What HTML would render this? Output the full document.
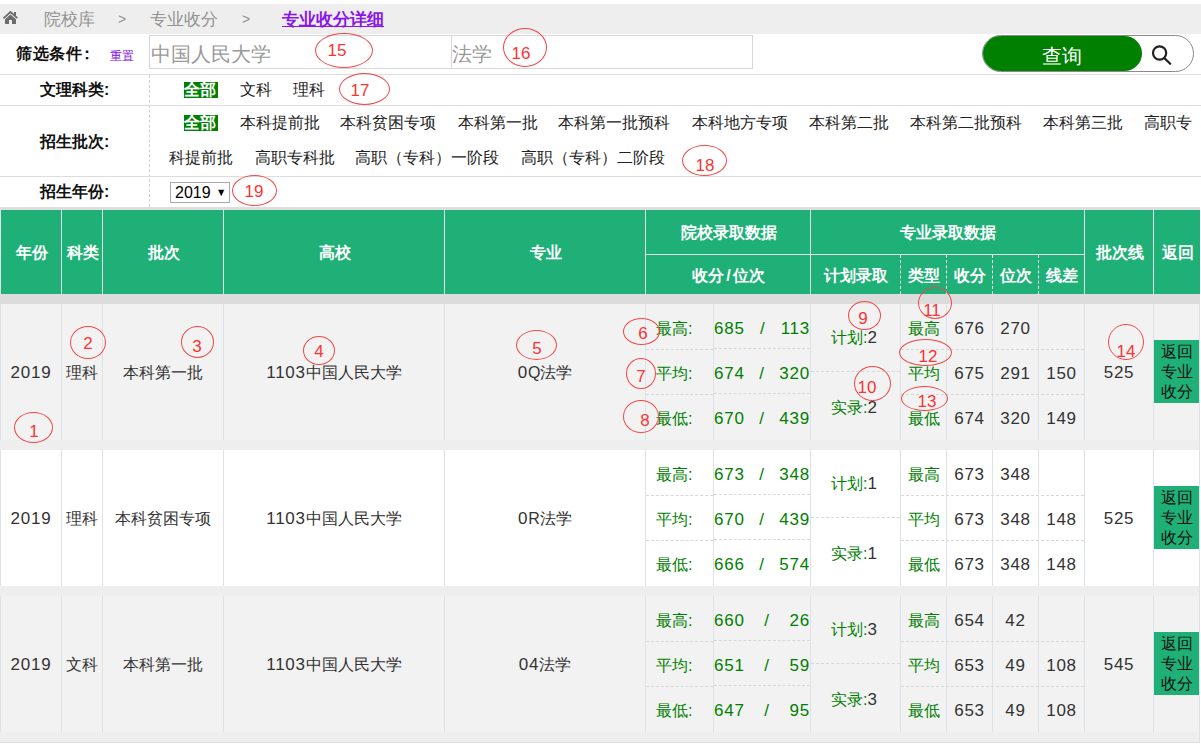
<!DOCTYPE html>
<html><head><meta charset="utf-8"><style>
html,body{margin:0;padding:0;}
body{width:1201px;height:744px;overflow:hidden;position:relative;background:#fff;font-family:"Liberation Sans", sans-serif;}
.t{position:absolute;white-space:nowrap;}
.r{position:absolute;}
.d{font-size:17px;letter-spacing:0.75px;}
</style></head><body>
<div class="r" style="left:0px;top:4px;width:1201px;height:30px;background:#eeeeee"></div>
<svg class="r" style="left:0;top:0" width="30" height="30" viewBox="0 0 30 30"><path d="M3.4 18.3 L10.5 12 L17.4 18.1" fill="none" stroke="#6b6b6b" stroke-width="1.7"/><rect x="14" y="12" width="2" height="4" fill="#6b6b6b"/><path d="M5 19.2 L10.5 14.4 L16 19.2 V23.9 H12 V20 H9 V23.9 H5 Z" fill="#6b6b6b"/></svg>
<div class="t" style="left:44px;top:11px;font-size:17px;line-height:17px;color:#929292;font-weight:normal;">院校库</div>
<div class="t" style="left:118px;top:12px;font-size:14px;line-height:14px;color:#929292;font-weight:normal;">&gt;</div>
<div class="t" style="left:150px;top:11px;font-size:17px;line-height:17px;color:#929292;font-weight:normal;">专业收分</div>
<div class="t" style="left:242px;top:12px;font-size:14px;line-height:14px;color:#929292;font-weight:normal;">&gt;</div>
<div class="t" style="left:282px;top:11px;font-size:17px;line-height:17px;color:#8a17e6;font-weight:bold;text-decoration:underline">专业收分详细</div>
<div class="t" style="left:16px;top:46px;font-size:16px;line-height:16px;color:#111;font-weight:bold;letter-spacing:0.7px">筛选条件<span style="margin-left:-4px">：</span></div>
<div class="t" style="left:110px;top:50px;font-size:12px;line-height:12px;color:#7c0ce0;font-weight:normal;letter-spacing:-0.3px">重置</div>
<div class="r" style="left:149px;top:35px;width:303px;height:34px;border:1px solid #d6d6d6;box-sizing:border-box"></div>
<div class="r" style="left:451px;top:35px;width:302px;height:34px;border:1px solid #d6d6d6;box-sizing:border-box"></div>
<div class="t" style="left:151px;top:43.5px;font-size:20px;line-height:20px;color:#999;font-weight:normal;">中国人民大学</div>
<div class="t" style="left:452px;top:43.5px;font-size:20px;line-height:20px;color:#999;font-weight:normal;">法学</div>
<div class="r" style="left:982px;top:35px;width:212px;height:37px;border:1px solid #8a8a8a;border-radius:19px;box-sizing:border-box;background:#fff"></div>
<div class="r" style="left:983px;top:36px;width:159px;height:35px;background:#008000;border-radius:18px"></div>
<div class="t" style="left:1042px;top:45.5px;font-size:20px;line-height:20px;color:#fff;font-weight:normal;">查询</div>
<svg class="r" style="left:1150px;top:43px" width="24" height="24" viewBox="0 0 24 24"><circle cx="9.6" cy="10" r="6.6" fill="none" stroke="#222" stroke-width="2.2"/><path d="M14.3 15 L20.2 20.8" stroke="#222" stroke-width="2.3" stroke-linecap="round"/></svg>
<div class="r" style="left:0px;top:74px;width:1201px;height:1px;background:#dddddd"></div>
<div class="t" style="left:40px;top:82px;font-size:16px;line-height:16px;color:#111;font-weight:bold;">文理科类:</div>
<div class="r" style="left:149px;top:75px;width:1px;height:132px;border-left:1px dashed #cfcfcf"></div>
<div class="r" style="left:184px;top:82px;width:34px;height:16px;background:#008000"></div>
<div class="t" style="left:184px;top:82px;font-size:16px;line-height:16px;color:#fff;font-weight:bold;">全部</div>
<div class="t" style="left:240px;top:82px;font-size:16px;line-height:16px;color:#222;font-weight:normal;">文科</div>
<div class="t" style="left:293px;top:82px;font-size:16px;line-height:16px;color:#222;font-weight:normal;">理科</div>
<div class="r" style="left:0px;top:105px;width:1201px;height:1px;background:#dddddd"></div>
<div class="t" style="left:40px;top:134px;font-size:16px;line-height:16px;color:#111;font-weight:bold;">招生批次:</div>
<div class="r" style="left:184px;top:115px;width:34px;height:16px;background:#008000"></div>
<div class="t" style="left:184px;top:115px;font-size:16px;line-height:16px;color:#fff;font-weight:bold;">全部</div>
<div class="t" style="left:240px;top:115px;font-size:16px;line-height:16px;color:#222;font-weight:normal;">本科提前批</div>
<div class="t" style="left:340px;top:115px;font-size:16px;line-height:16px;color:#222;font-weight:normal;">本科贫困专项</div>
<div class="t" style="left:458px;top:115px;font-size:16px;line-height:16px;color:#222;font-weight:normal;">本科第一批</div>
<div class="t" style="left:558px;top:115px;font-size:16px;line-height:16px;color:#222;font-weight:normal;">本科第一批预科</div>
<div class="t" style="left:692px;top:115px;font-size:16px;line-height:16px;color:#222;font-weight:normal;">本科地方专项</div>
<div class="t" style="left:809px;top:115px;font-size:16px;line-height:16px;color:#222;font-weight:normal;">本科第二批</div>
<div class="t" style="left:910px;top:115px;font-size:16px;line-height:16px;color:#222;font-weight:normal;">本科第二批预科</div>
<div class="t" style="left:1043px;top:115px;font-size:16px;line-height:16px;color:#222;font-weight:normal;">本科第三批</div>
<div class="t" style="left:1144px;top:115px;font-size:16px;line-height:16px;color:#222;font-weight:normal;">高职专</div>
<div class="t" style="left:169px;top:150px;font-size:16px;line-height:16px;color:#222;font-weight:normal;">科提前批</div>
<div class="t" style="left:255px;top:150px;font-size:16px;line-height:16px;color:#222;font-weight:normal;">高职专科批</div>
<div class="t" style="left:355px;top:150px;font-size:16px;line-height:16px;color:#222;font-weight:normal;">高职（专科）一阶段</div>
<div class="t" style="left:521px;top:150px;font-size:16px;line-height:16px;color:#222;font-weight:normal;">高职（专科）二阶段</div>
<div class="r" style="left:0px;top:176px;width:1201px;height:1px;background:#dddddd"></div>
<div class="t" style="left:40px;top:184px;font-size:16px;line-height:16px;color:#111;font-weight:bold;">招生年份:</div>
<div class="r" style="left:170px;top:182px;width:60px;height:21px;border:1px solid #a9a9a9;box-sizing:border-box;background:#fff"></div>
<div class="t" style="left:175px;top:185px;font-size:16px;line-height:16px;color:#000;font-weight:normal;">2019</div>
<div class="t" style="left:216px;top:186.5px;font-size:11px;line-height:11px;color:#000;font-weight:normal;transform:scaleX(0.95);transform-origin:left">&#9660;</div>
<div class="r" style="left:0px;top:207px;width:1200px;height:3px;background:#dedede"></div>
<div class="r" style="left:0px;top:210px;width:1200px;height:84px;background:#1fb077"></div>
<div class="r" style="left:61px;top:210px;width:1px;height:84px;background:#e2e6e8"></div>
<div class="r" style="left:102px;top:210px;width:1px;height:84px;background:#e2e6e8"></div>
<div class="r" style="left:223px;top:210px;width:1px;height:84px;background:#e2e6e8"></div>
<div class="r" style="left:444px;top:210px;width:1px;height:84px;background:#e2e6e8"></div>
<div class="r" style="left:645px;top:210px;width:1px;height:84px;background:#e2e6e8"></div>
<div class="r" style="left:810px;top:210px;width:1px;height:84px;background:#e2e6e8"></div>
<div class="r" style="left:1084px;top:210px;width:1px;height:84px;background:#e2e6e8"></div>
<div class="r" style="left:1153px;top:210px;width:1px;height:84px;background:#e2e6e8"></div>
<div class="r" style="left:0px;top:210px;width:1px;height:84px;background:#e2e6e8"></div>
<div class="r" style="left:645px;top:254px;width:439px;height:1px;background:#e2e6e8"></div>
<div class="r" style="left:900px;top:255px;width:1px;height:39px;border-left:1px dashed #f0f0f0"></div>
<div class="r" style="left:946px;top:255px;width:1px;height:39px;border-left:1px dashed #f0f0f0"></div>
<div class="r" style="left:992px;top:255px;width:1px;height:39px;border-left:1px dashed #f0f0f0"></div>
<div class="r" style="left:1038px;top:255px;width:1px;height:39px;border-left:1px dashed #f0f0f0"></div>
<div class="t" style="left:1.5px;top:245.0px;width:60px;text-align:center;font-size:16px;line-height:16px;color:#fff;font-weight:bold;">年份</div>
<div class="t" style="left:62.5px;top:245.0px;width:40px;text-align:center;font-size:16px;line-height:16px;color:#fff;font-weight:bold;">科类</div>
<div class="t" style="left:103.5px;top:245.0px;width:120px;text-align:center;font-size:16px;line-height:16px;color:#fff;font-weight:bold;">批次</div>
<div class="t" style="left:224.5px;top:245.0px;width:220px;text-align:center;font-size:16px;line-height:16px;color:#fff;font-weight:bold;">高校</div>
<div class="t" style="left:445.5px;top:245.0px;width:200px;text-align:center;font-size:16px;line-height:16px;color:#fff;font-weight:bold;">专业</div>
<div class="t" style="left:646.5px;top:225.0px;width:164px;text-align:center;font-size:16px;line-height:16px;color:#fff;font-weight:bold;">院校录取数据</div>
<div class="t" style="left:646.5px;top:267.5px;width:164px;text-align:center;font-size:16px;line-height:16px;color:#fff;font-weight:bold;">收分<span style="margin:0 2px">/</span>位次</div>
<div class="t" style="left:811.5px;top:225.0px;width:273px;text-align:center;font-size:16px;line-height:16px;color:#fff;font-weight:bold;">专业录取数据</div>
<div class="t" style="left:811.5px;top:267.5px;width:89px;text-align:center;font-size:16px;line-height:16px;color:#fff;font-weight:bold;">计划录取</div>
<div class="t" style="left:901.5px;top:267.5px;width:45px;text-align:center;font-size:16px;line-height:16px;color:#fff;font-weight:bold;">类型</div>
<div class="t" style="left:947.5px;top:267.5px;width:45px;text-align:center;font-size:16px;line-height:16px;color:#fff;font-weight:bold;">收分</div>
<div class="t" style="left:993.5px;top:267.5px;width:45px;text-align:center;font-size:16px;line-height:16px;color:#fff;font-weight:bold;">位次</div>
<div class="t" style="left:1039.5px;top:267.5px;width:45px;text-align:center;font-size:16px;line-height:16px;color:#fff;font-weight:bold;">线差</div>
<div class="t" style="left:1085.5px;top:245.0px;width:68px;text-align:center;font-size:16px;line-height:16px;color:#fff;font-weight:bold;">批次线</div>
<div class="t" style="left:1154.5px;top:245.0px;width:46px;text-align:center;font-size:16px;line-height:16px;color:#fff;font-weight:bold;">返回</div>
<div class="r" style="left:0px;top:294px;width:1200px;height:10px;background:#dcdcdc"></div>
<div class="r" style="left:0px;top:304px;width:1199px;height:136px;background:#f2f2f2"></div>
<div class="r" style="left:0px;top:304px;width:1px;height:136px;background:#dde1e8"></div>
<div class="r" style="left:61px;top:304px;width:1px;height:136px;background:#dde1e8"></div>
<div class="r" style="left:102px;top:304px;width:1px;height:136px;background:#dde1e8"></div>
<div class="r" style="left:223px;top:304px;width:1px;height:136px;background:#dde1e8"></div>
<div class="r" style="left:444px;top:304px;width:1px;height:136px;background:#dde1e8"></div>
<div class="r" style="left:645px;top:304px;width:1px;height:136px;background:#dde1e8"></div>
<div class="r" style="left:713px;top:304px;width:1px;height:136px;background:#dde1e8"></div>
<div class="r" style="left:810px;top:304px;width:1px;height:136px;background:#dde1e8"></div>
<div class="r" style="left:900px;top:304px;width:1px;height:136px;background:#dde1e8"></div>
<div class="r" style="left:946px;top:304px;width:1px;height:136px;background:#dde1e8"></div>
<div class="r" style="left:992px;top:304px;width:1px;height:136px;background:#dde1e8"></div>
<div class="r" style="left:1038px;top:304px;width:1px;height:136px;background:#dde1e8"></div>
<div class="r" style="left:1084px;top:304px;width:1px;height:136px;background:#dde1e8"></div>
<div class="r" style="left:1153px;top:304px;width:1px;height:136px;background:#dde1e8"></div>
<div class="r" style="left:1199px;top:304px;width:1px;height:136px;background:#dde1e8"></div>
<div class="r" style="left:646px;top:349px;width:67px;height:1px;border-top:1px dashed #d8d8d8"></div>
<div class="r" style="left:714px;top:348px;width:96px;height:1px;border-top:1px dashed #d8d8d8"></div>
<div class="r" style="left:901px;top:349px;width:183px;height:1px;border-top:1px dashed #d8d8d8"></div>
<div class="r" style="left:646px;top:394px;width:67px;height:1px;border-top:1px dashed #d8d8d8"></div>
<div class="r" style="left:714px;top:393px;width:96px;height:1px;border-top:1px dashed #d8d8d8"></div>
<div class="r" style="left:901px;top:394px;width:183px;height:1px;border-top:1px dashed #d8d8d8"></div>
<div class="r" style="left:811px;top:371px;width:89px;height:1px;border-top:1px dashed #d8d8d8"></div>
<div class="t" style="left:-19.0px;top:365px;width:100px;text-align:center;font-size:16px;line-height:16px;color:#333;font-weight:normal;"><span class="d">2019</span></div>
<div class="t" style="left:42.0px;top:365px;width:80px;text-align:center;font-size:16px;line-height:16px;color:#333;font-weight:normal;">理科</div>
<div class="t" style="left:83.0px;top:365px;width:160px;text-align:center;font-size:16px;line-height:16px;color:#333;font-weight:normal;">本科第一批</div>
<div class="t" style="left:204.0px;top:365px;width:260px;text-align:center;font-size:16px;line-height:16px;color:#333;font-weight:normal;"><span class="d">1103</span>中国人民大学</div>
<div class="t" style="left:425.0px;top:365px;width:240px;text-align:center;font-size:16px;line-height:16px;color:#333;font-weight:normal;"><span class="d">0</span>Q法学</div>
<div class="t" style="left:1065.0px;top:365px;width:108px;text-align:center;font-size:16px;line-height:16px;color:#333;font-weight:normal;"><span class="d">525</span></div>
<div class="t" style="left:656px;top:321px;font-size:16px;line-height:16px;color:#008000;font-weight:normal;">最高:</div>
<div class="t" style="left:714px;top:320.5px;width:96px;display:flex;justify-content:space-between;font-size:16px;line-height:16px;color:#008000"><span class="d">685</span><span class="d">/</span><span class="d">113</span></div>
<div class="t" style="left:656px;top:366px;font-size:16px;line-height:16px;color:#008000;font-weight:normal;">平均:</div>
<div class="t" style="left:714px;top:365.5px;width:96px;display:flex;justify-content:space-between;font-size:16px;line-height:16px;color:#008000"><span class="d">674</span><span class="d">/</span><span class="d">320</span></div>
<div class="t" style="left:656px;top:411px;font-size:16px;line-height:16px;color:#008000;font-weight:normal;">最低:</div>
<div class="t" style="left:714px;top:410.5px;width:96px;display:flex;justify-content:space-between;font-size:16px;line-height:16px;color:#008000"><span class="d">670</span><span class="d">/</span><span class="d">439</span></div>
<div class="t" style="left:901.0px;top:321px;width:45px;text-align:center;font-size:16px;line-height:16px;color:#008000;font-weight:normal;">最高</div>
<div class="t" style="left:946.5px;top:320.5px;width:46px;text-align:center;font-size:16px;line-height:16px;color:#333;font-weight:normal;"><span class="d">676</span></div>
<div class="t" style="left:992.5px;top:320.5px;width:46px;text-align:center;font-size:16px;line-height:16px;color:#333;font-weight:normal;"><span class="d">270</span></div>
<div class="t" style="left:901.0px;top:366px;width:45px;text-align:center;font-size:16px;line-height:16px;color:#008000;font-weight:normal;">平均</div>
<div class="t" style="left:946.5px;top:365.5px;width:46px;text-align:center;font-size:16px;line-height:16px;color:#333;font-weight:normal;"><span class="d">675</span></div>
<div class="t" style="left:992.5px;top:365.5px;width:46px;text-align:center;font-size:16px;line-height:16px;color:#333;font-weight:normal;"><span class="d">291</span></div>
<div class="t" style="left:1038.5px;top:365.5px;width:46px;text-align:center;font-size:16px;line-height:16px;color:#333;font-weight:normal;"><span class="d">150</span></div>
<div class="t" style="left:901.0px;top:411px;width:45px;text-align:center;font-size:16px;line-height:16px;color:#008000;font-weight:normal;">最低</div>
<div class="t" style="left:946.5px;top:410.5px;width:46px;text-align:center;font-size:16px;line-height:16px;color:#333;font-weight:normal;"><span class="d">674</span></div>
<div class="t" style="left:992.5px;top:410.5px;width:46px;text-align:center;font-size:16px;line-height:16px;color:#333;font-weight:normal;"><span class="d">320</span></div>
<div class="t" style="left:1038.5px;top:410.5px;width:46px;text-align:center;font-size:16px;line-height:16px;color:#333;font-weight:normal;"><span class="d">149</span></div>
<div class="t" style="left:831px;top:330px;font-size:16px;line-height:16px;color:#008000;font-weight:normal;">计划:<span class="d" style="color:#333">2</span></div>
<div class="t" style="left:831px;top:400px;font-size:16px;line-height:16px;color:#008000;font-weight:normal;">实录:<span class="d" style="color:#333">2</span></div>
<div class="r" style="left:1154px;top:340px;width:45px;height:63px;background:#1fb077"></div>
<div class="t" style="left:1154.0px;top:342px;width:45px;text-align:center;font-size:16px;line-height:16px;color:#111;font-weight:normal;line-height:20px">返回<br>专业<br>收分</div>
<div class="r" style="left:0px;top:440px;width:1199px;height:10px;background:#eeeeee"></div>
<div class="r" style="left:1199px;top:440px;width:1px;height:10px;background:#dde1e8"></div>
<div class="r" style="left:0px;top:450px;width:1199px;height:136px;background:#ffffff"></div>
<div class="r" style="left:0px;top:450px;width:1px;height:136px;background:#dde1e8"></div>
<div class="r" style="left:61px;top:450px;width:1px;height:136px;background:#dde1e8"></div>
<div class="r" style="left:102px;top:450px;width:1px;height:136px;background:#dde1e8"></div>
<div class="r" style="left:223px;top:450px;width:1px;height:136px;background:#dde1e8"></div>
<div class="r" style="left:444px;top:450px;width:1px;height:136px;background:#dde1e8"></div>
<div class="r" style="left:645px;top:450px;width:1px;height:136px;background:#dde1e8"></div>
<div class="r" style="left:713px;top:450px;width:1px;height:136px;background:#dde1e8"></div>
<div class="r" style="left:810px;top:450px;width:1px;height:136px;background:#dde1e8"></div>
<div class="r" style="left:900px;top:450px;width:1px;height:136px;background:#dde1e8"></div>
<div class="r" style="left:946px;top:450px;width:1px;height:136px;background:#dde1e8"></div>
<div class="r" style="left:992px;top:450px;width:1px;height:136px;background:#dde1e8"></div>
<div class="r" style="left:1038px;top:450px;width:1px;height:136px;background:#dde1e8"></div>
<div class="r" style="left:1084px;top:450px;width:1px;height:136px;background:#dde1e8"></div>
<div class="r" style="left:1153px;top:450px;width:1px;height:136px;background:#dde1e8"></div>
<div class="r" style="left:1199px;top:450px;width:1px;height:136px;background:#dde1e8"></div>
<div class="r" style="left:646px;top:495px;width:67px;height:1px;border-top:1px dashed #d8d8d8"></div>
<div class="r" style="left:714px;top:494px;width:96px;height:1px;border-top:1px dashed #d8d8d8"></div>
<div class="r" style="left:901px;top:495px;width:183px;height:1px;border-top:1px dashed #d8d8d8"></div>
<div class="r" style="left:646px;top:540px;width:67px;height:1px;border-top:1px dashed #d8d8d8"></div>
<div class="r" style="left:714px;top:539px;width:96px;height:1px;border-top:1px dashed #d8d8d8"></div>
<div class="r" style="left:901px;top:540px;width:183px;height:1px;border-top:1px dashed #d8d8d8"></div>
<div class="r" style="left:811px;top:517px;width:89px;height:1px;border-top:1px dashed #d8d8d8"></div>
<div class="t" style="left:-19.0px;top:511px;width:100px;text-align:center;font-size:16px;line-height:16px;color:#333;font-weight:normal;"><span class="d">2019</span></div>
<div class="t" style="left:42.0px;top:511px;width:80px;text-align:center;font-size:16px;line-height:16px;color:#333;font-weight:normal;">理科</div>
<div class="t" style="left:83.0px;top:511px;width:160px;text-align:center;font-size:16px;line-height:16px;color:#333;font-weight:normal;">本科贫困专项</div>
<div class="t" style="left:204.0px;top:511px;width:260px;text-align:center;font-size:16px;line-height:16px;color:#333;font-weight:normal;"><span class="d">1103</span>中国人民大学</div>
<div class="t" style="left:425.0px;top:511px;width:240px;text-align:center;font-size:16px;line-height:16px;color:#333;font-weight:normal;"><span class="d">0</span>R法学</div>
<div class="t" style="left:1065.0px;top:511px;width:108px;text-align:center;font-size:16px;line-height:16px;color:#333;font-weight:normal;"><span class="d">525</span></div>
<div class="t" style="left:656px;top:467px;font-size:16px;line-height:16px;color:#008000;font-weight:normal;">最高:</div>
<div class="t" style="left:714px;top:466.5px;width:96px;display:flex;justify-content:space-between;font-size:16px;line-height:16px;color:#008000"><span class="d">673</span><span class="d">/</span><span class="d">348</span></div>
<div class="t" style="left:656px;top:512px;font-size:16px;line-height:16px;color:#008000;font-weight:normal;">平均:</div>
<div class="t" style="left:714px;top:511.5px;width:96px;display:flex;justify-content:space-between;font-size:16px;line-height:16px;color:#008000"><span class="d">670</span><span class="d">/</span><span class="d">439</span></div>
<div class="t" style="left:656px;top:557px;font-size:16px;line-height:16px;color:#008000;font-weight:normal;">最低:</div>
<div class="t" style="left:714px;top:556.5px;width:96px;display:flex;justify-content:space-between;font-size:16px;line-height:16px;color:#008000"><span class="d">666</span><span class="d">/</span><span class="d">574</span></div>
<div class="t" style="left:901.0px;top:467px;width:45px;text-align:center;font-size:16px;line-height:16px;color:#008000;font-weight:normal;">最高</div>
<div class="t" style="left:946.5px;top:466.5px;width:46px;text-align:center;font-size:16px;line-height:16px;color:#333;font-weight:normal;"><span class="d">673</span></div>
<div class="t" style="left:992.5px;top:466.5px;width:46px;text-align:center;font-size:16px;line-height:16px;color:#333;font-weight:normal;"><span class="d">348</span></div>
<div class="t" style="left:901.0px;top:512px;width:45px;text-align:center;font-size:16px;line-height:16px;color:#008000;font-weight:normal;">平均</div>
<div class="t" style="left:946.5px;top:511.5px;width:46px;text-align:center;font-size:16px;line-height:16px;color:#333;font-weight:normal;"><span class="d">673</span></div>
<div class="t" style="left:992.5px;top:511.5px;width:46px;text-align:center;font-size:16px;line-height:16px;color:#333;font-weight:normal;"><span class="d">348</span></div>
<div class="t" style="left:1038.5px;top:511.5px;width:46px;text-align:center;font-size:16px;line-height:16px;color:#333;font-weight:normal;"><span class="d">148</span></div>
<div class="t" style="left:901.0px;top:557px;width:45px;text-align:center;font-size:16px;line-height:16px;color:#008000;font-weight:normal;">最低</div>
<div class="t" style="left:946.5px;top:556.5px;width:46px;text-align:center;font-size:16px;line-height:16px;color:#333;font-weight:normal;"><span class="d">673</span></div>
<div class="t" style="left:992.5px;top:556.5px;width:46px;text-align:center;font-size:16px;line-height:16px;color:#333;font-weight:normal;"><span class="d">348</span></div>
<div class="t" style="left:1038.5px;top:556.5px;width:46px;text-align:center;font-size:16px;line-height:16px;color:#333;font-weight:normal;"><span class="d">148</span></div>
<div class="t" style="left:831px;top:476px;font-size:16px;line-height:16px;color:#008000;font-weight:normal;">计划:<span class="d" style="color:#333">1</span></div>
<div class="t" style="left:831px;top:546px;font-size:16px;line-height:16px;color:#008000;font-weight:normal;">实录:<span class="d" style="color:#333">1</span></div>
<div class="r" style="left:1154px;top:486px;width:45px;height:63px;background:#1fb077"></div>
<div class="t" style="left:1154.0px;top:488px;width:45px;text-align:center;font-size:16px;line-height:16px;color:#111;font-weight:normal;line-height:20px">返回<br>专业<br>收分</div>
<div class="r" style="left:0px;top:586px;width:1199px;height:10px;background:#eeeeee"></div>
<div class="r" style="left:1199px;top:586px;width:1px;height:10px;background:#dde1e8"></div>
<div class="r" style="left:0px;top:596px;width:1199px;height:136px;background:#f2f2f2"></div>
<div class="r" style="left:0px;top:596px;width:1px;height:136px;background:#dde1e8"></div>
<div class="r" style="left:61px;top:596px;width:1px;height:136px;background:#dde1e8"></div>
<div class="r" style="left:102px;top:596px;width:1px;height:136px;background:#dde1e8"></div>
<div class="r" style="left:223px;top:596px;width:1px;height:136px;background:#dde1e8"></div>
<div class="r" style="left:444px;top:596px;width:1px;height:136px;background:#dde1e8"></div>
<div class="r" style="left:645px;top:596px;width:1px;height:136px;background:#dde1e8"></div>
<div class="r" style="left:713px;top:596px;width:1px;height:136px;background:#dde1e8"></div>
<div class="r" style="left:810px;top:596px;width:1px;height:136px;background:#dde1e8"></div>
<div class="r" style="left:900px;top:596px;width:1px;height:136px;background:#dde1e8"></div>
<div class="r" style="left:946px;top:596px;width:1px;height:136px;background:#dde1e8"></div>
<div class="r" style="left:992px;top:596px;width:1px;height:136px;background:#dde1e8"></div>
<div class="r" style="left:1038px;top:596px;width:1px;height:136px;background:#dde1e8"></div>
<div class="r" style="left:1084px;top:596px;width:1px;height:136px;background:#dde1e8"></div>
<div class="r" style="left:1153px;top:596px;width:1px;height:136px;background:#dde1e8"></div>
<div class="r" style="left:1199px;top:596px;width:1px;height:136px;background:#dde1e8"></div>
<div class="r" style="left:646px;top:641px;width:67px;height:1px;border-top:1px dashed #d8d8d8"></div>
<div class="r" style="left:714px;top:640px;width:96px;height:1px;border-top:1px dashed #d8d8d8"></div>
<div class="r" style="left:901px;top:641px;width:183px;height:1px;border-top:1px dashed #d8d8d8"></div>
<div class="r" style="left:646px;top:686px;width:67px;height:1px;border-top:1px dashed #d8d8d8"></div>
<div class="r" style="left:714px;top:685px;width:96px;height:1px;border-top:1px dashed #d8d8d8"></div>
<div class="r" style="left:901px;top:686px;width:183px;height:1px;border-top:1px dashed #d8d8d8"></div>
<div class="r" style="left:811px;top:663px;width:89px;height:1px;border-top:1px dashed #d8d8d8"></div>
<div class="t" style="left:-19.0px;top:657px;width:100px;text-align:center;font-size:16px;line-height:16px;color:#333;font-weight:normal;"><span class="d">2019</span></div>
<div class="t" style="left:42.0px;top:657px;width:80px;text-align:center;font-size:16px;line-height:16px;color:#333;font-weight:normal;">文科</div>
<div class="t" style="left:83.0px;top:657px;width:160px;text-align:center;font-size:16px;line-height:16px;color:#333;font-weight:normal;">本科第一批</div>
<div class="t" style="left:204.0px;top:657px;width:260px;text-align:center;font-size:16px;line-height:16px;color:#333;font-weight:normal;"><span class="d">1103</span>中国人民大学</div>
<div class="t" style="left:425.0px;top:657px;width:240px;text-align:center;font-size:16px;line-height:16px;color:#333;font-weight:normal;"><span class="d">04</span>法学</div>
<div class="t" style="left:1065.0px;top:657px;width:108px;text-align:center;font-size:16px;line-height:16px;color:#333;font-weight:normal;"><span class="d">545</span></div>
<div class="t" style="left:656px;top:613px;font-size:16px;line-height:16px;color:#008000;font-weight:normal;">最高:</div>
<div class="t" style="left:714px;top:612.5px;width:96px;display:flex;justify-content:space-between;font-size:16px;line-height:16px;color:#008000"><span class="d">660</span><span class="d">/</span><span class="d">26</span></div>
<div class="t" style="left:656px;top:658px;font-size:16px;line-height:16px;color:#008000;font-weight:normal;">平均:</div>
<div class="t" style="left:714px;top:657.5px;width:96px;display:flex;justify-content:space-between;font-size:16px;line-height:16px;color:#008000"><span class="d">651</span><span class="d">/</span><span class="d">59</span></div>
<div class="t" style="left:656px;top:703px;font-size:16px;line-height:16px;color:#008000;font-weight:normal;">最低:</div>
<div class="t" style="left:714px;top:702.5px;width:96px;display:flex;justify-content:space-between;font-size:16px;line-height:16px;color:#008000"><span class="d">647</span><span class="d">/</span><span class="d">95</span></div>
<div class="t" style="left:901.0px;top:613px;width:45px;text-align:center;font-size:16px;line-height:16px;color:#008000;font-weight:normal;">最高</div>
<div class="t" style="left:946.5px;top:612.5px;width:46px;text-align:center;font-size:16px;line-height:16px;color:#333;font-weight:normal;"><span class="d">654</span></div>
<div class="t" style="left:992.5px;top:612.5px;width:46px;text-align:center;font-size:16px;line-height:16px;color:#333;font-weight:normal;"><span class="d">42</span></div>
<div class="t" style="left:901.0px;top:658px;width:45px;text-align:center;font-size:16px;line-height:16px;color:#008000;font-weight:normal;">平均</div>
<div class="t" style="left:946.5px;top:657.5px;width:46px;text-align:center;font-size:16px;line-height:16px;color:#333;font-weight:normal;"><span class="d">653</span></div>
<div class="t" style="left:992.5px;top:657.5px;width:46px;text-align:center;font-size:16px;line-height:16px;color:#333;font-weight:normal;"><span class="d">49</span></div>
<div class="t" style="left:1038.5px;top:657.5px;width:46px;text-align:center;font-size:16px;line-height:16px;color:#333;font-weight:normal;"><span class="d">108</span></div>
<div class="t" style="left:901.0px;top:703px;width:45px;text-align:center;font-size:16px;line-height:16px;color:#008000;font-weight:normal;">最低</div>
<div class="t" style="left:946.5px;top:702.5px;width:46px;text-align:center;font-size:16px;line-height:16px;color:#333;font-weight:normal;"><span class="d">653</span></div>
<div class="t" style="left:992.5px;top:702.5px;width:46px;text-align:center;font-size:16px;line-height:16px;color:#333;font-weight:normal;"><span class="d">49</span></div>
<div class="t" style="left:1038.5px;top:702.5px;width:46px;text-align:center;font-size:16px;line-height:16px;color:#333;font-weight:normal;"><span class="d">108</span></div>
<div class="t" style="left:831px;top:622px;font-size:16px;line-height:16px;color:#008000;font-weight:normal;">计划:<span class="d" style="color:#333">3</span></div>
<div class="t" style="left:831px;top:692px;font-size:16px;line-height:16px;color:#008000;font-weight:normal;">实录:<span class="d" style="color:#333">3</span></div>
<div class="r" style="left:1154px;top:632px;width:45px;height:63px;background:#1fb077"></div>
<div class="t" style="left:1154.0px;top:634px;width:45px;text-align:center;font-size:16px;line-height:16px;color:#111;font-weight:normal;line-height:20px">返回<br>专业<br>收分</div>
<div class="r" style="left:0px;top:732px;width:1199px;height:10px;background:#eeeeee"></div>
<div class="r" style="left:1199px;top:732px;width:1px;height:10px;background:#dde1e8"></div>
<div class="r" style="left:0px;top:742px;width:1200px;height:1px;background:#dcdcdc"></div>
<div class="r" style="left:14px;top:412px;width:39px;height:31px;border:1px solid #f04848;border-radius:50%;box-sizing:border-box"></div>
<div class="t" style="left:14.0px;top:423px;width:40px;text-align:center;font-size:17px;line-height:17px;color:#fa3434;font-weight:normal;">1</div>
<div class="r" style="left:70px;top:326px;width:36px;height:33px;border:1px solid #f04848;border-radius:50%;box-sizing:border-box"></div>
<div class="t" style="left:68.0px;top:335px;width:40px;text-align:center;font-size:17px;line-height:17px;color:#fa3434;font-weight:normal;">2</div>
<div class="r" style="left:181px;top:326px;width:33px;height:32px;border:1px solid #f04848;border-radius:50%;box-sizing:border-box"></div>
<div class="t" style="left:177.0px;top:338px;width:40px;text-align:center;font-size:17px;line-height:17px;color:#fa3434;font-weight:normal;">3</div>
<div class="r" style="left:303px;top:336px;width:32px;height:29px;border:1px solid #f04848;border-radius:50%;box-sizing:border-box"></div>
<div class="t" style="left:299.0px;top:343px;width:40px;text-align:center;font-size:17px;line-height:17px;color:#fa3434;font-weight:normal;">4</div>
<div class="r" style="left:516px;top:330px;width:41px;height:30px;border:1px solid #f04848;border-radius:50%;box-sizing:border-box"></div>
<div class="t" style="left:517.0px;top:340px;width:40px;text-align:center;font-size:17px;line-height:17px;color:#fa3434;font-weight:normal;">5</div>
<div class="r" style="left:623px;top:318px;width:37px;height:27px;border:1px solid #f04848;border-radius:50%;box-sizing:border-box"></div>
<div class="t" style="left:623.0px;top:325px;width:40px;text-align:center;font-size:17px;line-height:17px;color:#fa3434;font-weight:normal;">6</div>
<div class="r" style="left:626px;top:358px;width:30px;height:31px;border:1px solid #f04848;border-radius:50%;box-sizing:border-box"></div>
<div class="t" style="left:621.0px;top:368px;width:40px;text-align:center;font-size:17px;line-height:17px;color:#fa3434;font-weight:normal;">7</div>
<div class="r" style="left:623px;top:400px;width:36px;height:33px;border:1px solid #f04848;border-radius:50%;box-sizing:border-box"></div>
<div class="t" style="left:625.0px;top:412px;width:40px;text-align:center;font-size:17px;line-height:17px;color:#fa3434;font-weight:normal;">8</div>
<div class="r" style="left:848px;top:301px;width:33px;height:29px;border:1px solid #f04848;border-radius:50%;box-sizing:border-box"></div>
<div class="t" style="left:843.0px;top:310px;width:40px;text-align:center;font-size:17px;line-height:17px;color:#fa3434;font-weight:normal;">9</div>
<div class="r" style="left:854px;top:366px;width:37px;height:35px;border:1px solid #f04848;border-radius:50%;box-sizing:border-box"></div>
<div class="t" style="left:847.0px;top:379px;width:40px;text-align:center;font-size:17px;line-height:17px;color:#fa3434;font-weight:normal;">10</div>
<div class="r" style="left:918px;top:287px;width:34px;height:32px;border:1px solid #f04848;border-radius:50%;box-sizing:border-box"></div>
<div class="t" style="left:912.0px;top:302px;width:40px;text-align:center;font-size:17px;line-height:17px;color:#fa3434;font-weight:normal;">11</div>
<div class="r" style="left:899px;top:339px;width:53px;height:27px;border:1px solid #f04848;border-radius:50%;box-sizing:border-box"></div>
<div class="t" style="left:908.0px;top:348px;width:40px;text-align:center;font-size:17px;line-height:17px;color:#fa3434;font-weight:normal;">12</div>
<div class="r" style="left:901px;top:386px;width:47px;height:25px;border:1px solid #f04848;border-radius:50%;box-sizing:border-box"></div>
<div class="t" style="left:907.0px;top:393px;width:40px;text-align:center;font-size:17px;line-height:17px;color:#fa3434;font-weight:normal;">13</div>
<div class="r" style="left:1108px;top:324px;width:36px;height:36px;border:1px solid #f04848;border-radius:50%;box-sizing:border-box"></div>
<div class="t" style="left:1106.0px;top:343px;width:40px;text-align:center;font-size:17px;line-height:17px;color:#fa3434;font-weight:normal;">14</div>
<div class="r" style="left:315px;top:33px;width:58px;height:35px;border:1px solid #f04848;border-radius:50%;box-sizing:border-box"></div>
<div class="t" style="left:317.0px;top:42px;width:40px;text-align:center;font-size:17px;line-height:17px;color:#fa3434;font-weight:normal;">15</div>
<div class="r" style="left:503px;top:28px;width:44px;height:39px;border:1px solid #f04848;border-radius:50%;box-sizing:border-box"></div>
<div class="t" style="left:501.0px;top:45px;width:40px;text-align:center;font-size:17px;line-height:17px;color:#fa3434;font-weight:normal;">16</div>
<div class="r" style="left:339px;top:73px;width:51px;height:32px;border:1px solid #f04848;border-radius:50%;box-sizing:border-box"></div>
<div class="t" style="left:340.0px;top:82px;width:40px;text-align:center;font-size:17px;line-height:17px;color:#fa3434;font-weight:normal;">17</div>
<div class="r" style="left:682px;top:145px;width:45px;height:31px;border:1px solid #f04848;border-radius:50%;box-sizing:border-box"></div>
<div class="t" style="left:685.0px;top:157px;width:40px;text-align:center;font-size:17px;line-height:17px;color:#fa3434;font-weight:normal;">18</div>
<div class="r" style="left:232px;top:175px;width:45px;height:31px;border:1px solid #f04848;border-radius:50%;box-sizing:border-box"></div>
<div class="t" style="left:234.0px;top:183px;width:40px;text-align:center;font-size:17px;line-height:17px;color:#fa3434;font-weight:normal;">19</div>
</body></html>
